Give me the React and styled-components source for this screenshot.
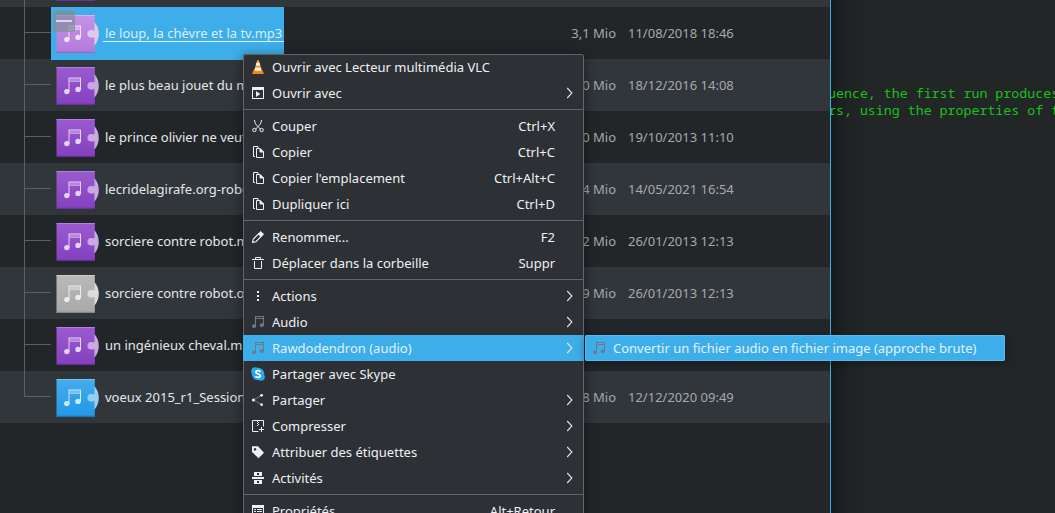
import React from 'react';
import styled, { createGlobalStyle, css } from 'styled-components';

const Global = createGlobalStyle`
  html, body { margin: 0; padding: 0; background: #232627; }
  body { overflow: hidden; }
  * { box-sizing: border-box; }
`;

const Desktop = styled.div`
  position: relative;
  display: flex;
  width: 1055px;
  height: 513px;
  overflow: hidden;
  background: #232627;
  font-family: "Noto Sans", sans-serif;
  font-size: 13px;
  line-height: 18px;
  color: #eff0f1;
`;

const FilePanel = styled.div`
  flex: none;
  width: 831px;
  height: 513px;
  overflow: hidden;
  background: #232629;
  border-right: 1px solid #3daee9;
`;

const FileList = styled.div`
  display: flex;
  flex-direction: column;
  margin-top: -45px;
`;

const FileRow = styled.div`
  flex: none;
  display: flex;
  height: 52px;
  background: ${(p) => (p.$alt ? '#31363b' : '#232629')};
`;

const Branch = styled.div`
  flex: none;
  width: 27px;
  height: 52px;
  margin-left: 24px;
  display: flex;
  flex-direction: column;
`;

const BranchTop = styled.div`
  height: 26px;
  border-left: 1px solid #5c6063;
  border-bottom: 1px solid #5c6063;
`;

const BranchBottom = styled.div`
  height: 26px;
  border-left: 1px solid ${(p) => (p.$last ? 'transparent' : '#5c6063')};
`;

const NameCell = styled.div`
  position: relative;
  flex: none;
  display: flex;
  width: 233px;
  height: ${(p) => (p.$selected ? 53 : 52)}px;
  background: ${(p) => (p.$selected ? '#3daee9' : 'transparent')};
  white-space: nowrap;
`;

const FileName = styled.span`
  flex: none;
  align-self: flex-start;
  margin-top: 17px;
  margin-left: 4px;
  padding-left: 2px;
  height: 18px;
  color: ${(p) => (p.$selected ? '#d8eefb' : '#e6e7e8')};
  ${(p) =>
    p.$selected &&
    css`
      width: 181px;
      border-bottom: 1px solid #e3f2fc;
    `}
`;

const SizeCell = styled.div`
  width: 332px;
  padding-top: 17px;
  text-align: right;
  color: #a7a9ab;
`;

const DateCell = styled.div`
  padding: 17px 0 0 12px;
  color: #a7a9ab;
`;

const SelectionBadge = styled.div`
  position: absolute;
  left: 2px;
  top: 3px;
  width: 22px;
  height: 22px;
  padding: 9px 3px 0;
  border: 1px solid rgba(125, 155, 165, 0.8);
  border-radius: 2px;
  background: rgba(125, 140, 150, 0.65);
`;

const Dash = styled.div`
  height: 2px;
  margin: 0 -1px;
  background: #e3d5ef;
`;

const Terminal = styled.div`
  flex: 1;
  overflow: hidden;
  height: 513px;
  padding-top: 85px;
  background: linear-gradient(90deg, #17181a 0, #1c1e20 8px, #202324 18px, #232627 34px);
  font-family: "Noto Sans Mono", "DejaVu Sans Mono", monospace;
  font-size: 13.29px;
  line-height: 17px;
  color: #18c018;
`;

const TerminalLine = styled.div`
  white-space: pre;
  margin-left: -3px;
`;

const Menu = styled.div`
  position: absolute;
  left: 243px;
  top: 54px;
  width: 341px;
  height: 480px;
  background: #2d3035;
  border-radius: 3px;
  box-shadow: inset 0 0 0 1px #626569, 0 2px 12px 1px rgba(0, 0, 0, 0.4);
`;

const Submenu = styled.div`
  position: absolute;
  left: 585px;
  top: 335px;
  width: 420px;
  height: 26px;
  border-radius: 2px;
  background: #3daee9;
  box-shadow: inset 0 0 0 1px #58b9ed, 0 2px 10px 0 rgba(0, 0, 0, 0.35);
`;

const MenuItem = styled.div`
  display: flex;
  align-items: center;
  height: 26px;
  padding-left: ${(p) => (p.$nested ? 6 : 7)}px;
  padding-right: 11px;
  white-space: nowrap;
  background: ${(p) => (p.$active ? '#3daee9' : 'transparent')};
  color: ${(p) => (p.$active || p.$nested ? '#e0f1fc' : '#eff0f1')};
  svg { flex: none; display: block; }
`;

const Label = styled.span`
  flex: 1;
  margin-left: 6px;
`;

const Shortcut = styled.span`
  margin-right: 18px;
`;

const Separator = styled.div`
  height: 1px;
  margin: 3px 1px;
  background: #626569;
`;

const palettes = {
  purple: ['#9b5bcf', '#8440c0', '#c9a8e4', '#b07fda', '#65309a'],
  selected: ['#c493e6', '#b57adb', '#e0c9f1', '#d6b5ee', '#9265b6'],
  gray: ['#b9b9b9', '#a9a9a9', '#dcdcdc', '#cccccc', '#858585'],
  blue: ['#46acec', '#2098e6', '#96cff5', '#75c1f2', '#1b73ae'],
};

function AudioFile({ tone }) {
  const [top, bottom, tab, hi, lo] = palettes[tone];
  const id = `grad-${tone}`;
  return (
    <svg width="48" height="52" viewBox="0 0 48 52">
      <defs>
        <linearGradient id={id} x1="0" y1="0" x2="0" y2="1">
          <stop offset="0" stopColor={top} />
          <stop offset="1" stopColor={bottom} />
        </linearGradient>
      </defs>
      <rect x="5.5" y="8" width="38.3" height="37.8" fill={`url(#${id})`} />
      <rect x="5.5" y="8" width="38.3" height="1" fill={hi} />
      <rect x="5.5" y="44.8" width="38.3" height="1" fill={lo} />
      <path
        d="M43.4 15C46.4 18.4 47.8 22.4 47.8 26.8S46.4 35.2 43.4 38.7V30.2C42.4 29.9 41.8 30.6 40.2 30.6A3.8 3.8 0 0 1 40.2 23C41.8 23 42.4 23.6 43.4 23.3Z"
        fill={tab}
      />
      <g fill="#fff" fillOpacity=".76">
        <circle cx="15.8" cy="32.6" r="2.7" />
        <circle cx="27" cy="30.4" r="2.7" />
        <path d="M17.5 18.6H30V30.4H29V19.6H18.5V32.6H17.5Z" />
        <rect x="18.5" y="19.6" width="10.5" height="2.6" fillOpacity=".3" />
        <rect x="18.5" y="22" width="10.5" height=".8" fillOpacity=".5" />
      </g>
    </svg>
  );
}

const ink = '#eff0f1';

const glyphs = {
  vlc: (
    <>
      <path d="M3.6 11h8.8l1.6 4H2z" fill="#f28a12" />
      <path d="M7.2 1.2h1.6l3 10.3c-1.6 1.2-6 1.2-7.6 0z" fill="#f8a22a" />
      <path d="M6.5 3.7h3l.8 2.8H5.7z M5.1 8.7h5.8l.6 2.2c-1.8 1.2-5.2 1.2-7 0z" fill="#f4f4f4" />
    </>
  ),
  open: <path fillRule="evenodd" d="M2 2h12v12H2zM3 5v8h10V5zM6 6l4.3 3L6 12z" fill={ink} />,
  cut: (
    <g fill="none" stroke={ink}>
      <path d="M4.5 2C4.7 5 6 7 10.3 11M11.5 2C11.3 5 10 7 5.7 11" />
      <circle cx="4.4" cy="12" r="1.7" />
      <circle cx="11.6" cy="12" r="1.7" />
    </g>
  ),
  copy: (
    <g fill="none" stroke={ink}>
      <path d="M5 12.5H3.5v-10H8V4" />
      <path d="M6.5 4.5H10L13.5 8v5.5h-7z" />
      <path d="M10 4.5V8h3.5z" fill={ink} />
    </g>
  ),
  rename: (
    <>
      <path d="M2.6 13.4l.7-3.3L8.5 4.9l2.6 2.6-5.2 5.2z" fill="none" stroke={ink} strokeWidth="1.1" />
      <path d="M8 4.7L10.7 2l3.3 3.3L11.3 8zM2.2 14v-2.2L4.2 14z" fill={ink} />
    </>
  ),
  trash: (
    <path d="M2 4.5h12M5.5 4V2.5h5V4M4.5 6v7.5h7V6" fill="none" stroke={ink} />
  ),
  dots: <path d="M7 3h2v2H7zM7 7h2v2H7zM7 11h2v2H7z" fill={ink} />,
  audio: (
    <g fill="#6e7a88">
      <circle cx="4" cy="12.2" r="1.9" />
      <circle cx="11.7" cy="11.2" r="1.9" />
      <path d="M5 2h9v9.5h-1V5H6v7.4H5zM6 3v1h7V3z" fillRule="evenodd" />
    </g>
  ),
  skype: (
    <>
      <circle cx="8" cy="8" r="6.2" fill="#29a8ec" />
      <circle cx="5" cy="5" r="3.8" fill="#29a8ec" />
      <circle cx="11" cy="11" r="3.8" fill="#29a8ec" />
      <path
        d="M10.4 6C9.9 4.1 5.9 4.2 5.9 6.2c0 2.2 4.5 1.4 4.5 3.6 0 2-4.2 2.2-4.9.1"
        fill="none"
        stroke="#fff"
        strokeWidth="1.6"
      />
    </>
  ),
  share: (
    <>
      <path d="M3.5 8L12 3.2M3.5 8l8.5 4.8" stroke={ink} strokeDasharray="1 1.3" strokeWidth=".9" />
      <circle cx="3.4" cy="8" r="1.5" fill={ink} />
      <circle cx="11.6" cy="3.3" r="1.4" fill={ink} />
      <circle cx="11.6" cy="12.7" r="1.4" fill={ink} />
    </>
  ),
  archive: (
    <>
      <path d="M8.5 13.5h-6v-11h11v6" fill="none" stroke={ink} />
      <path d="M7 3h1v1H7zM8 4h1v1H8zM7 5h1v1H7zM8 6h1v1H8zM7 7h1v1H7zM11 9h1v5h-1zM9 11h5v1H9z" fill={ink} />
    </>
  ),
  tag: (
    <path
      fillRule="evenodd"
      d="M2 2.2h6L14 8.8 8.6 14.2 2 8zM5 4a1.3 1.3 0 1 0 .01 0z"
      fill={ink}
    />
  ),
  activities: (
    <path
      fillRule="evenodd"
      d="M4 2h8v4H4zM7 3v2h2V3zM2 7h12v2H2zM4 10h8v4H4zM7 11v2h2v-2z"
      fill={ink}
    />
  ),
  properties: (
    <path
      fillRule="evenodd"
      d="M2 2h12v12H2zM3 5v8h10V5zM4 6h2v1H4zM7 6h5v1H7zM4 8h2v1H4zM7 8h5v1H7z"
      fill={ink}
    />
  ),
};

function Icon({ name }) {
  return (
    <svg width="16" height="16" viewBox="0 0 16 16">
      {glyphs[name]}
    </svg>
  );
}

function Arrow() {
  return (
    <svg width="7" height="12" viewBox="0 0 7 12">
      <path d="M1.2 1l4.7 5-4.7 5" fill="none" stroke="#e3e5e7" strokeWidth="1.1" />
    </svg>
  );
}

const files = [
  { name: '', size: '', date: '', tone: 'purple' },
  { name: 'le loup, la chèvre et la tv.mp3', size: '3,1 Mio', date: '11/08/2018 18:46', tone: 'selected' },
  { name: 'le plus beau jouet du m', size: '0 Mio', date: '18/12/2016 14:08', tone: 'purple' },
  { name: 'le prince olivier ne veut', size: '0 Mio', date: '19/10/2013 11:10', tone: 'purple' },
  { name: 'lecridelagirafe.org-robo', size: '4 Mio', date: '14/05/2021 16:54', tone: 'purple' },
  { name: 'sorciere contre robot.m', size: '2 Mio', date: '26/01/2013 12:13', tone: 'purple' },
  { name: 'sorciere contre robot.o', size: '9 Mio', date: '26/01/2013 12:13', tone: 'gray' },
  { name: 'un ingénieux cheval.m', size: '', date: '', tone: 'purple' },
  { name: 'voeux 2015_r1_Session', size: '8 Mio', date: '12/12/2020 09:49', tone: 'blue' },
];

const menu = [
  { icon: 'vlc', label: 'Ouvrir avec Lecteur multimédia VLC' },
  { icon: 'open', label: 'Ouvrir avec', arrow: true },
  null,
  { icon: 'cut', label: 'Couper', keys: 'Ctrl+X' },
  { icon: 'copy', label: 'Copier', keys: 'Ctrl+C' },
  { icon: 'copy', label: "Copier l'emplacement", keys: 'Ctrl+Alt+C' },
  { icon: 'copy', label: 'Dupliquer ici', keys: 'Ctrl+D' },
  null,
  { icon: 'rename', label: 'Renommer...', keys: 'F2' },
  { icon: 'trash', label: 'Déplacer dans la corbeille', keys: 'Suppr' },
  null,
  { icon: 'dots', label: 'Actions', arrow: true },
  { icon: 'audio', label: 'Audio', arrow: true },
  { icon: 'audio', label: 'Rawdodendron (audio)', arrow: true, active: true },
  { icon: 'skype', label: 'Partager avec Skype' },
  { icon: 'share', label: 'Partager', arrow: true },
  { icon: 'archive', label: 'Compresser', arrow: true },
  { icon: 'tag', label: 'Attribuer des étiquettes', arrow: true },
  { icon: 'activities', label: 'Activités', arrow: true },
  null,
  { icon: 'properties', label: 'Propriétés', keys: 'Alt+Retour' },
];

export default function App() {
  return (
    <Desktop>
      <Global />
      <FilePanel>
        <FileList>
          {files.map((f, i) => {
            const selected = f.tone === 'selected';
            return (
              <FileRow key={i} $alt={i % 2 === 0}>
                <Branch>
                  <BranchTop />
                  <BranchBottom $last={i === files.length - 1} />
                </Branch>
                <NameCell $selected={selected}>
                  <AudioFile tone={f.tone} />
                  {selected && (
                    <SelectionBadge>
                      <Dash />
                    </SelectionBadge>
                  )}
                  <FileName $selected={selected}>{f.name}</FileName>
                </NameCell>
                <SizeCell>{f.size}</SizeCell>
                <DateCell>{f.date}</DateCell>
              </FileRow>
            );
          })}
        </FileList>
      </FilePanel>
      <Terminal>
        <TerminalLine>uence, the first run produces</TerminalLine>
        <TerminalLine>rs, using the properties of t</TerminalLine>
      </Terminal>
      <Menu>
        {menu.map((m, i) =>
          m ? (
            <MenuItem key={i} $active={m.active}>
              <Icon name={m.icon} />
              <Label>{m.label}</Label>
              {m.keys && <Shortcut>{m.keys}</Shortcut>}
              {m.arrow && <Arrow />}
            </MenuItem>
          ) : (
            <Separator key={i} />
          )
        )}
      </Menu>
      <Submenu>
        <MenuItem $nested>
          <Icon name="audio" />
          <Label>Convertir un fichier audio en fichier image (approche brute)</Label>
        </MenuItem>
      </Submenu>
    </Desktop>
  );
}
